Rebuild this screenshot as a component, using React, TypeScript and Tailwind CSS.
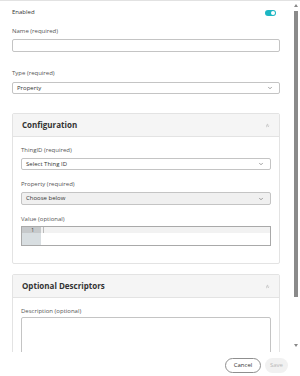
import { ChevronDown, ChevronsUp } from 'lucide-react';

function Label({ children }: { children: React.ReactNode }) {
  return <div className="h-[8px] leading-[8px] text-[6px] text-[#555]">{children}</div>;
}

function Select({ value, disabled, tall }: { value: string; disabled?: boolean; tall?: boolean }) {
  return (
    <div
      className={`flex items-center justify-between rounded-[2px] border border-[#c4c4c4] pl-[4px] pr-[6px] text-[6px] text-[#333] ${
        tall ? 'h-[13px]' : 'h-[12px]'
      } ${disabled ? 'bg-[#f0f0f0]' : 'bg-white'}`}
    >
      <span>{value}</span>
      <ChevronDown size={6} strokeWidth={2.5} className="text-[#666]" />
    </div>
  );
}

function CardHeader({ title }: { title: string }) {
  return (
    <div className="flex h-[23px] items-center justify-between border-b border-[#e3e3e3] bg-[#f5f5f5] pl-[9px] pr-[9px]">
      <span className="text-[8px] font-bold text-[#333]">{title}</span>
      <ChevronsUp size={5} strokeWidth={2.5} className="text-[#999]" />
    </div>
  );
}

export default function App() {
  return (
    <div
      className="flex h-[376px] w-[300px] flex-col border-t border-[#e2e2e2] bg-white"
      style={{ fontFamily: '"Open Sans", sans-serif' }}
    >
      {/* Scrollable form */}
      <div className="flex h-[351px] overflow-hidden">
        <div className="w-[292px] px-[12px] pt-[7px]">
          {/* Enabled */}
          <div className="flex h-[8px] items-center justify-between">
            <span className="text-[6px] leading-[8px] text-[#333]">Enabled</span>
            <div className="mr-[4px] mt-[2px] flex h-[6px] w-[11px] items-center justify-end rounded-full bg-[#1cb6c3] pr-[1px]">
              <div className="h-[4px] w-[4px] rounded-full bg-white" />
            </div>
          </div>

          <div className="mt-[11px]">
            <Label>Name (required)</Label>
          </div>
          <div className="mt-[4px] h-[13px] rounded-[2px] border border-[#c4c4c4] bg-white" />

          <div className="mt-[17px]">
            <Label>Type (required)</Label>
          </div>
          <div className="mt-[5px]">
            <Select value="Property" />
          </div>

          {/* Configuration */}
          <div className="mt-[19px] rounded-[2px] border border-[#e3e3e3]">
            <CardHeader title="Configuration" />
            <div className="px-[8px] pb-[17px] pt-[9px]">
              <Label>ThingID (required)</Label>
              <div className="mt-[4px]">
                <Select value="Select Thing ID" />
              </div>
              <div className="mt-[10px]">
                <Label>Property (required)</Label>
              </div>
              <div className="mt-[4px]">
                <Select value="Choose below" disabled tall />
              </div>
              <div className="mt-[10px]">
                <Label>Value (optional)</Label>
              </div>
              {/* Code editor */}
              <div className="mt-[3px] flex h-[20px] border-[1.5px] border-[#a9a9a9] bg-white">
                <div className="flex w-[19px] flex-col bg-[#d8dee1]">
                  <div className="flex h-[6px] items-center justify-end bg-[#c6c9cb] pr-[7px] text-[5px] leading-[6px] text-[#333]">
                    1
                  </div>
                </div>
                <div className="flex-1">
                  <div className="h-[6px] bg-[#f2f2f2] pl-[2px]">
                    <div className="h-[6px] w-px bg-[#bbb]" />
                  </div>
                </div>
              </div>
            </div>
          </div>

          {/* Optional Descriptors */}
          <div className="mt-[10px] rounded-[2px] border border-[#e3e3e3]">
            <CardHeader title="Optional Descriptors" />
            <div className="px-[8px] pt-[9px]">
              <Label>Description (optional)</Label>
              <div className="mt-[2px] h-[40px] rounded-[2px] border border-[#c4c4c4] bg-white" />
            </div>
          </div>
        </div>

        {/* Scrollbar */}
        <div className="flex w-[8px] flex-col items-center pt-[3px]">
          <div className="h-0 w-0 border-x-[2px] border-b-[3px] border-x-transparent border-b-[#888]" />
          <div className="mt-[4px] h-[286px] w-[4px] bg-[#8a8a8a]" />
          <div className="mt-[47px] h-0 w-0 border-x-[2px] border-t-[3px] border-x-transparent border-t-[#888]" />
        </div>
      </div>

      {/* Footer */}
      <div className="flex items-start justify-end gap-[4px] pr-[12px] pt-[6px]">
        <button className="h-[15px] w-[36px] rounded-full border border-[#8f8f8f] bg-white text-[6px] text-[#333]">
          Cancel
        </button>
        <button className="h-[15px] w-[23px] rounded-full bg-[#f1f1f1] text-[6px] text-[#b8b8b8]">
          Save
        </button>
      </div>
    </div>
  );
}
